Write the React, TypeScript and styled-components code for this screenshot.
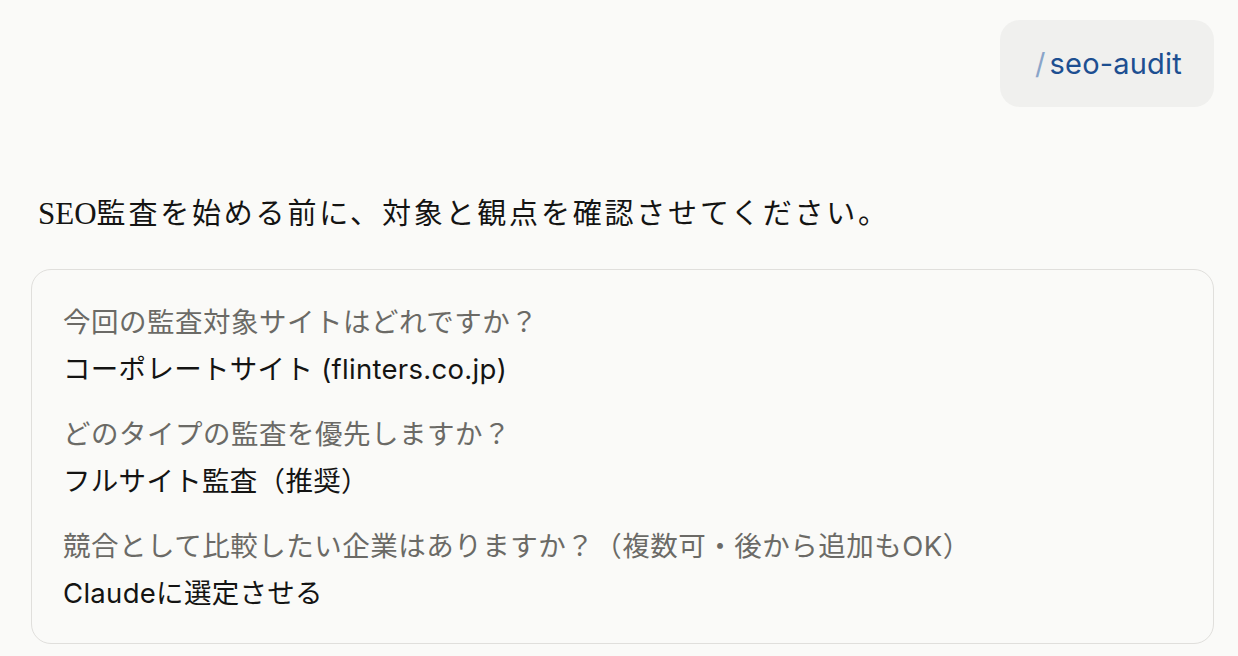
import styled, { createGlobalStyle } from "styled-components";

const GlobalStyle = createGlobalStyle`
  html, body {
    margin: 0;
    padding: 0;
    background: #fafaf8;
  }
  body {
    font-family: Inter, "Noto Sans CJK JP", sans-serif;
    color: #141413;
  }
`;

const Page = styled.div`
  width: 1238px;
  height: 656px;
  box-sizing: border-box;
  padding: 20px 24px 0 31px;
  display: flex;
  flex-direction: column;
  overflow: hidden;
`;

const UserRow = styled.div`
  display: flex;
  justify-content: flex-end;
`;

const Bubble = styled.div`
  background: #f0f0ee;
  border-radius: 20px;
  height: 87px;
  padding: 0 32px 0 35px;
  display: flex;
  align-items: center;
  font-size: 29px;
  color: #1d4f91;
  letter-spacing: 0.2px;
`;

const Slash = styled.span`
  color: #8aa5c9;
  margin-right: 4px;
`;

const Intro = styled.p`
  margin: 88px 0 0 7px;
  font-family: "Liberation Serif", "Noto Sans CJK JP", serif;
  font-size: 29px;
  letter-spacing: 2.8px;
  line-height: 38px;
  color: #141413;
`;

const Latin = styled.span`
  font-size: 31px;
  letter-spacing: 0;
`;

const Card = styled.div`
  margin-top: 36px;
  border: 1.5px solid #e0dfdc;
  border-radius: 20px;
  padding: 35px 31px 33px 31px;
  display: flex;
  flex-direction: column;
  gap: 31px;
`;

const Item = styled.div`
  display: flex;
  flex-direction: column;
  gap: 13px;
`;

const Question = styled.div`
  font-size: 27.5px;
  letter-spacing: 0.5px;
  line-height: 34px;
  color: #6b6a66;
`;

const Answer = styled.div`
  font-size: 27.5px;
  letter-spacing: 0.3px;
  line-height: 34px;
  color: #141413;
`;

const items = [
  { q: "今回の監査対象サイトはどれですか？", a: "コーポレートサイト (flinters.co.jp)" },
  { q: "どのタイプの監査を優先しますか？", a: "フルサイト監査（推奨）" },
  {
    q: "競合として比較したい企業はありますか？（複数可・後から追加もOK）",
    a: "Claudeに選定させる",
  },
];

export default function App() {
  return (
    <>
      <GlobalStyle />
      <Page>
        <UserRow>
          <Bubble>
            <Slash>/</Slash>seo-audit
          </Bubble>
        </UserRow>
        <Intro>
          <Latin>SEO</Latin>監査を始める前に、対象と観点を確認させてください。
        </Intro>
        <Card>
          {items.map((it) => (
            <Item key={it.q}>
              <Question>{it.q}</Question>
              <Answer>{it.a}</Answer>
            </Item>
          ))}
        </Card>
      </Page>
    </>
  );
}
